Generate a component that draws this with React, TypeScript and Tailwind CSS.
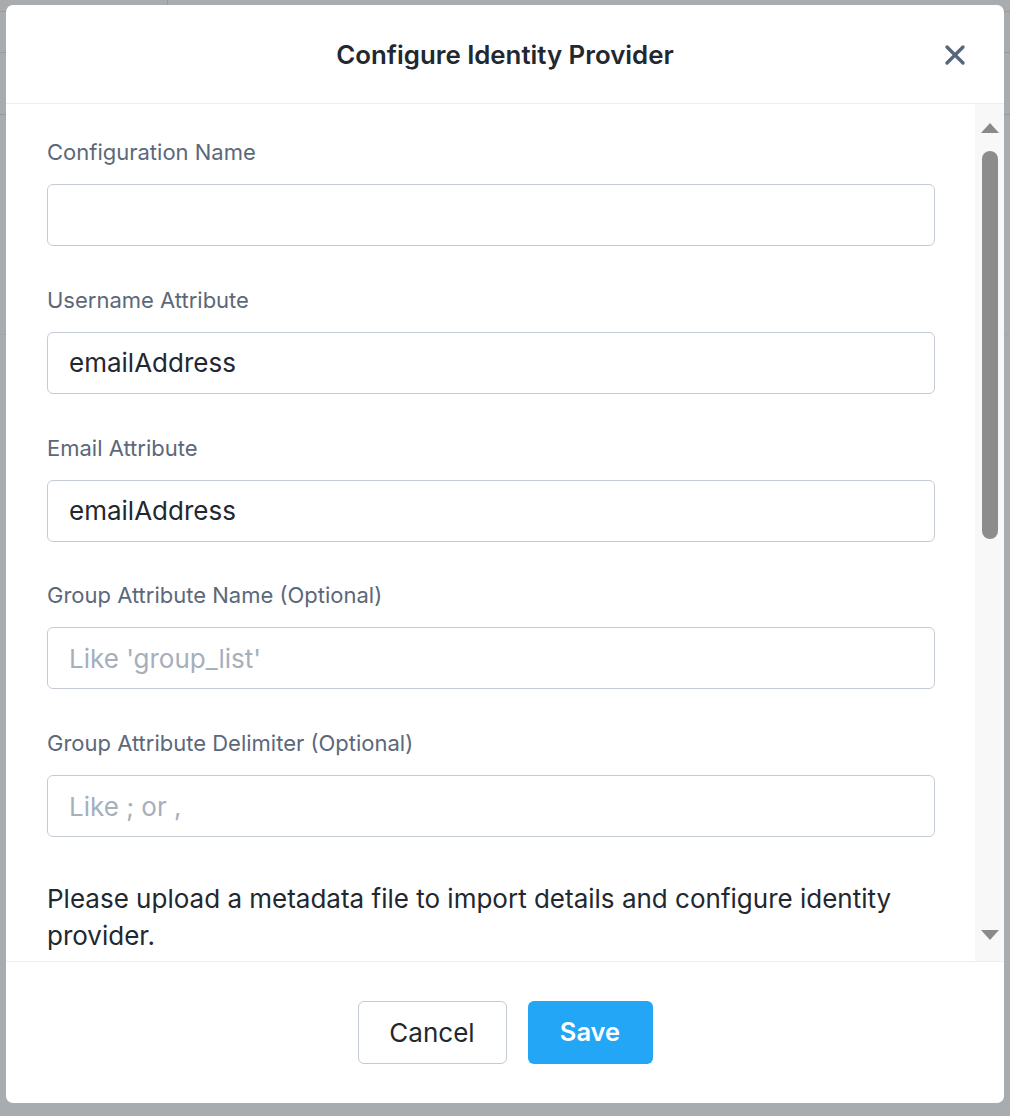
import React from "react";

const fields = [
  { label: "Configuration Name", value: "", placeholder: "" },
  { label: "Username Attribute", value: "emailAddress", placeholder: "" },
  { label: "Email Attribute", value: "emailAddress", placeholder: "" },
  { label: "Group Attribute Name (Optional)", value: "", placeholder: "Like 'group_list'" },
  { label: "Group Attribute Delimiter (Optional)", value: "", placeholder: "Like ; or ," },
];

const FONT = "Inter, 'Open Sans', sans-serif";

export default function App() {
  return (
    <div className="relative w-[1010px] h-[1116px] bg-[#a9acaf] overflow-hidden" style={{ fontFamily: FONT }}>
      {/* Dimmed page behind the modal */}
      <div className="flex flex-col">
        <div className="h-[12px] border-b border-[#959aa3] flex">
          <div className="w-[168px] border-r border-[#959aa3]" />
        </div>
        <div className="h-[41px] border-b border-[#959aa3]" />
        <div className="h-[62px] border-b border-[#959aa3]" />
        <div className="h-[220px] border-b border-[#a2a6ab]" />
      </div>

      {/* Modal */}
      <div className="absolute top-[5px] left-[6px] w-[998px] h-[1098px] bg-white rounded-[7px] flex flex-col overflow-hidden">
        {/* Header */}
        <div className="h-[99px] shrink-0 border-b border-[#eceef1] flex items-center justify-center relative">
          <h1 className="text-[25.8px] font-semibold text-[#22282f] pt-[2px]">Configure Identity Provider</h1>
          <button className="absolute right-[38px] top-[39px] w-[22px] h-[22px] flex items-center justify-center">
            <svg width="22" height="22" viewBox="0 0 22 22">
              <path d="M3 3 L19 19 M19 3 L3 19" stroke="#56677c" strokeWidth="3.4" strokeLinecap="round" />
            </svg>
          </button>
        </div>

        {/* Body */}
        <div className="h-[858px] shrink-0 flex border-b border-[#eceef1]">
          <div className="flex-1 overflow-hidden pl-[41px] pr-[40px] pt-[36px]">
            {fields.map((f) => (
              <div key={f.label} className="mb-[41.8px]">
                <label className="block text-[22px] leading-[24px] text-[#5c6879] mb-[20px]">{f.label}</label>
                <input
                  readOnly
                  value={f.value}
                  placeholder={f.placeholder}
                  className="w-full h-[62px] border-[1.5px] border-[#c5cbd3] rounded-[6px] px-[21px] text-[26px] text-[#22282f] placeholder:text-[#a6afbc] outline-none"
                  style={{ fontFamily: FONT }}
                />
              </div>
            ))}
            <p className="text-[26px] leading-[37px] text-[#22282f] pt-[1px]">
              Please upload a metadata file to import details and configure identity provider.
            </p>
          </div>
          {/* Scrollbar */}
          <div className="w-[29px] shrink-0 bg-[#f8f8f8] flex flex-col items-center pt-[19px] pb-[21px]">
            <svg width="18" height="10" viewBox="0 0 18 10" className="shrink-0 ml-[1px]">
              <path d="M9 0 L18 10 L0 10 Z" fill="#8a8a8a" />
            </svg>
            <div className="w-[16px] h-[388px] mt-[18px] rounded-full bg-[#8c8c8c] ml-[1px]" />
            <div className="flex-1" />
            <svg width="18" height="10" viewBox="0 0 18 10" className="shrink-0 ml-[1px]">
              <path d="M0 0 L18 0 L9 10 Z" fill="#8a8a8a" />
            </svg>
          </div>
        </div>

        {/* Footer */}
        <div className="flex-1 flex items-center justify-center gap-[21px]">
          <button className="w-[149px] h-[63px] border-[1.5px] border-[#c5cbd3] rounded-[6px] text-[26px] text-[#22282f] bg-white">
            Cancel
          </button>
          <button className="w-[125px] h-[63px] rounded-[6px] text-[25.5px] font-semibold text-white bg-[#22a6f5]">
            Save
          </button>
        </div>
      </div>
    </div>
  );
}
